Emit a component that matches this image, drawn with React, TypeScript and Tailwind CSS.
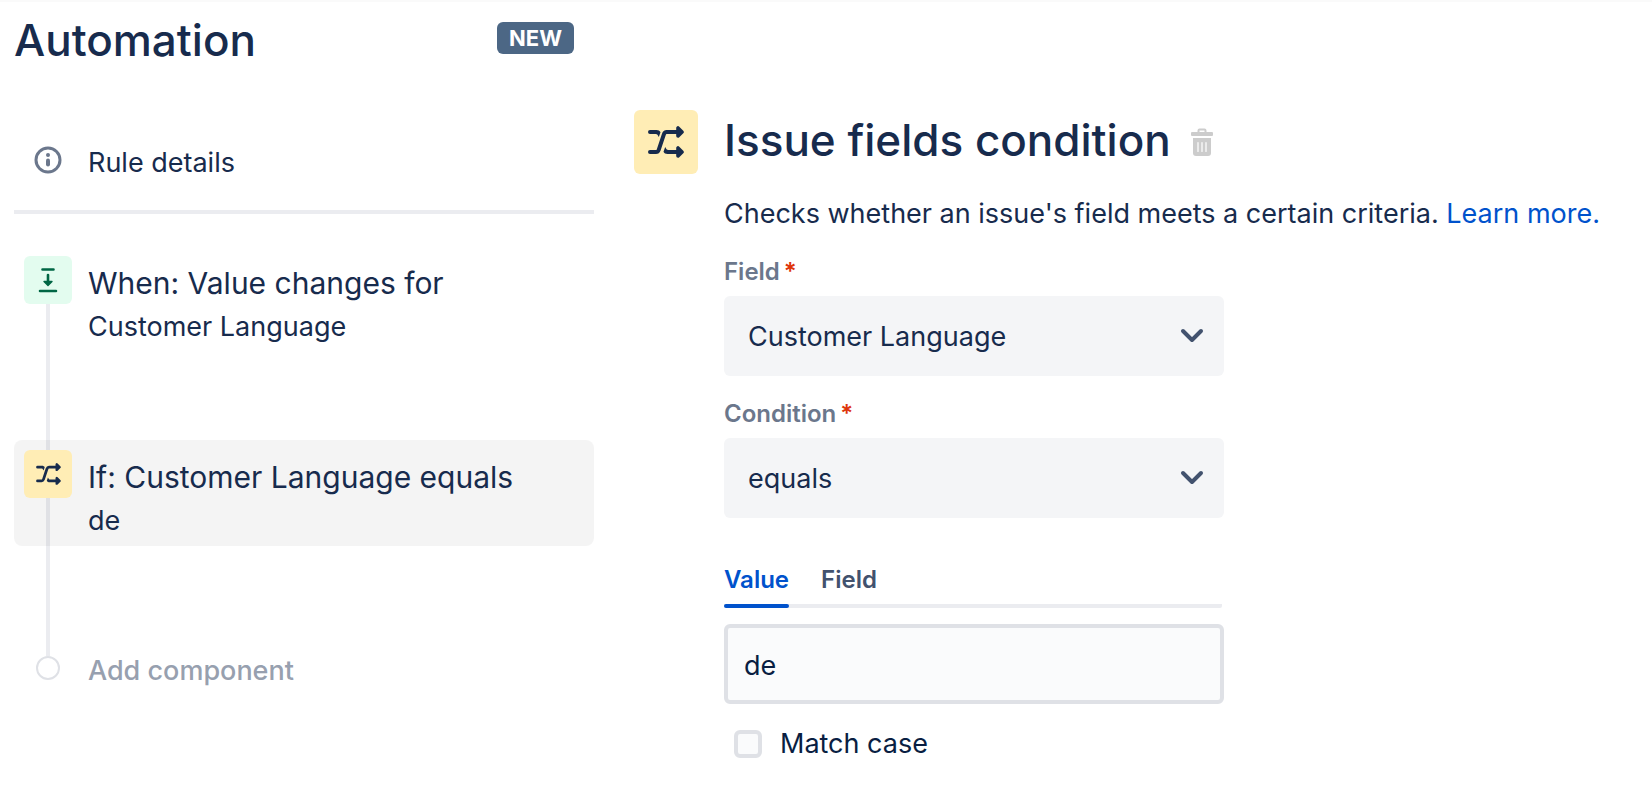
import {useState} from 'react';
import type {ReactNode} from 'react';

function ShuffleIcon({className}: {className?: string}) {
	return (
		<svg viewBox="0 0 36 32" className={className} fill="none" stroke="currentColor" strokeWidth="4" strokeLinecap="round" strokeLinejoin="round" aria-hidden="true">
			<path d="M2 26h6c1.400 0 2.200-.8 2.700-2.200l5-15C16.200 7.200 17.200 6 18.700 6H32" />
			<path d="M2 4h6.500c2 0 3.200.8 4 2.200L10.800 11 9.500 8.800C9 8.200 8.500 8 7.800 8H2a2 2 0 0 1 0-4z" fill="currentColor" stroke="none" />
			<path d="M17.200 21l1.300 2.200c.5.6 1 .8 1.700.8H32v4H19.500c-2 0-3.200-.8-4-2.200z" fill="currentColor" stroke="none" />
			<path d="M30 2v8l4-4zM30 22v8l4-4z" fill="currentColor" strokeWidth="3.600" />
		</svg>
	);
}

function InfoIcon() {
	return (
		<svg viewBox="0 0 28 28" className="size-7 text-[#6b778c]" fill="none" aria-hidden="true">
			<circle cx="14" cy="14" r="12" stroke="currentColor" strokeWidth="3" />
			<circle cx="14" cy="9" r="2" fill="currentColor" />
			<rect x="12" y="12.500" width="4" height="8" rx="2" fill="currentColor" />
		</svg>
	);
}

function TriggerIcon() {
	return (
		<svg viewBox="0 0 20 26" className="h-[26px] w-5" fill="none" stroke="currentColor" strokeLinecap="round" strokeLinejoin="round" aria-hidden="true">
			<path d="M4.500 2.500h11M2 24h16" strokeWidth="2.600" />
			<path d="M10 8v7" strokeWidth="2.600" />
			<path d="M6 14.500h8l-4 4z" fill="currentColor" strokeWidth="1.400" />
		</svg>
	);
}

function TrashIcon() {
	return (
		<svg viewBox="0 0 22 28" className="h-7 w-[22px]" aria-hidden="true">
			<path d="M7.500 5V2.500c0-.6.4-1 1-1h5c.6 0 1 .4 1 1V5" fill="none" stroke="currentColor" strokeWidth="2" />
			<rect x="0" y="4" width="22" height="4" rx="1" fill="currentColor" />
			<path d="M2 10h18v15a3 3 0 0 1-3 3H5a3 3 0 0 1-3-3z" fill="currentColor" />
			<path d="M7 14.500v9M11 14.500v9M15 14.500v9" stroke="#fff" strokeWidth="1.200" strokeLinecap="round" />
		</svg>
	);
}

function Chevron() {
	return (
		<svg viewBox="0 0 24 16" className="pointer-events-none absolute right-5 top-8 h-4 w-6 text-[#42526e]" fill="none" stroke="currentColor" strokeWidth="4" strokeLinecap="round" strokeLinejoin="round" aria-hidden="true">
			<path d="M3 3l9 9 9-9" />
		</svg>
	);
}

function Step({tile, title, detail, selected}: {tile: ReactNode; title: string; detail: string; selected?: boolean}) {
	return (
		<li>
			<button
				type="button"
				aria-current={selected ? 'step' : undefined}
				className={`relative flex w-full items-start gap-4 rounded-lg px-2.5 pt-2.5 pb-[3px] text-left ${selected ? 'bg-black/[0.043]' : ''}`}
			>
				{tile}
				<span className="block pt-[5px]">
					<span className="block text-[30px] leading-[44px]">{title}</span>
					<span className="block text-[27px] leading-[44px]">{detail}</span>
				</span>
			</button>
		</li>
	);
}

function SelectField({id, label, options}: {id: string; label: string; options: string[]}) {
	return (
		<div className="mt-[22px]">
			<label htmlFor={id} className="mb-2 flex gap-1 text-2xl leading-8 font-semibold text-[#6b778c]">
				{label}
				<span className="text-[#de350b]">*</span>
			</label>
			<div className="relative">
				<select id={id} className="h-20 w-full appearance-none rounded-md bg-[#f4f5f7] px-6 pt-0.5 text-[27px] text-[#172b4d]">
					{options.map((option) => (
						<option key={option}>{option}</option>
					))}
				</select>
				<Chevron />
			</div>
		</div>
	);
}

export default function App() {
	const [value, setValue] = useState('de');
	const [matchCase, setMatchCase] = useState(false);

	return (
		<div className="grid grid-cols-[minmax(0,580px)_minmax(0,1fr)] gap-10 border-t-2 border-[#fafafa] bg-white px-3.5 font-['Inter',sans-serif] text-[#172b4d]">
			{/* Rule outline */}
			<aside className="pt-3.5">
				<div className="flex items-start justify-between pr-5">
					<h1 className="text-[44px] leading-[48px] font-medium">Automation</h1>
					<span className="mt-1.5 rounded-md bg-[#4c6785] px-3 text-[22px] leading-8 font-bold text-white">NEW</span>
				</div>

				<button type="button" className="mt-[62px] flex w-full items-start gap-4 border-b-4 border-[#ebecf0] px-2.5 pt-2.5 pb-[25px] text-left">
					<span className="grid size-12 shrink-0 place-items-center">
						<InfoIcon />
					</span>
					<span className="pt-[5px] text-[27px] leading-[44px]">Rule details</span>
				</button>

				<ol className="relative mt-8 flex flex-col gap-[88px]">
					{/* Connector behind the steps */}
					<li aria-hidden="true" className="absolute top-3 bottom-10 left-8 w-1 bg-[#ebecf0]" />
					<Step
						title="When: Value changes for"
						detail="Customer Language"
						tile={
							<span className="grid size-12 shrink-0 place-items-center rounded-md bg-[#e3fcef] text-[#006644]">
								<TriggerIcon />
							</span>
						}
					/>
					<Step
						selected
						title="If: Customer Language equals"
						detail="de"
						tile={
							<span className="grid size-12 shrink-0 place-items-center rounded-md bg-[#ffedb5]">
								<ShuffleIcon className="h-[22px] w-[25px]" />
							</span>
						}
					/>
					<li>
						<button type="button" className="relative flex w-full items-start gap-4 px-2.5 pt-2.5 pb-[3px] text-left">
							<span className="grid size-12 shrink-0 place-items-center">
								<span className="size-6 rounded-full border-2 border-[#dfe1e6] bg-white" />
							</span>
							<span className="pt-[5px] text-[27px] leading-[44px] font-medium text-[#97a0af]">Add component</span>
						</button>
					</li>
				</ol>
			</aside>

			{/* Condition settings */}
			<main className="grid grid-cols-[64px_minmax(0,1fr)] content-start gap-x-[26px] pt-[108px]">
				<span className="grid size-16 place-items-center rounded-md bg-[#ffedb5]">
					<ShuffleIcon className="h-8 w-9" />
				</span>
				<div>
					<div className="flex gap-5">
						<h2 className="text-[44px] leading-[60px] font-medium">Issue fields condition</h2>
						<button type="button" aria-label="Delete condition" className="pt-1 text-[#cccccc]">
							<TrashIcon />
						</button>
					</div>
					<p className="mt-6 text-[27px] leading-10">
						Checks whether an issue's field meets a certain criteria.{' '}
						<a href="#learn-more" className="text-[#0052cc]">Learn more.</a>
					</p>

					<form className="max-w-[500px]">
						<SelectField id="field" label="Field" options={['Customer Language']} />
						<SelectField id="condition" label="Condition" options={['equals']} />

						<div role="tablist" className="mt-[46px] mr-0.5 flex gap-8 rounded-xs bg-[linear-gradient(#ebecf0,#ebecf0)] bg-[length:100%_4px] bg-bottom bg-no-repeat text-2xl leading-8 font-semibold">
							<button type="button" role="tab" aria-selected="true" className="text-[#0052cc]">
								<span className="block pb-2">Value</span>
								<span className="block h-1 rounded-full bg-[#0052cc]" />
							</button>
							<button type="button" role="tab" aria-selected="false" className="pb-3 text-[#42526e]">Field</button>
						</div>

						<input
							type="text"
							aria-label="Value"
							value={value}
							onChange={(e) => setValue(e.target.value)}
							className="mt-4 block h-20 w-full rounded-md border-4 border-[#dfe1e6] bg-[#fafbfc] px-4 pt-0.5 text-[27px] text-[#091e42]"
						/>

						<label className="mt-5 ml-2.5 flex items-center gap-[18px] text-[27px] leading-10 text-[#091e42]">
							<input
								type="checkbox"
								checked={matchCase}
								onChange={(e) => setMatchCase(e.target.checked)}
								className="size-7 appearance-none rounded-md border-4 border-[#dfe1e6] bg-[#fafbfc] checked:bg-[#0052cc]"
							/>
							Match case
						</label>
					</form>
				</div>
			</main>
		</div>
	);
}
